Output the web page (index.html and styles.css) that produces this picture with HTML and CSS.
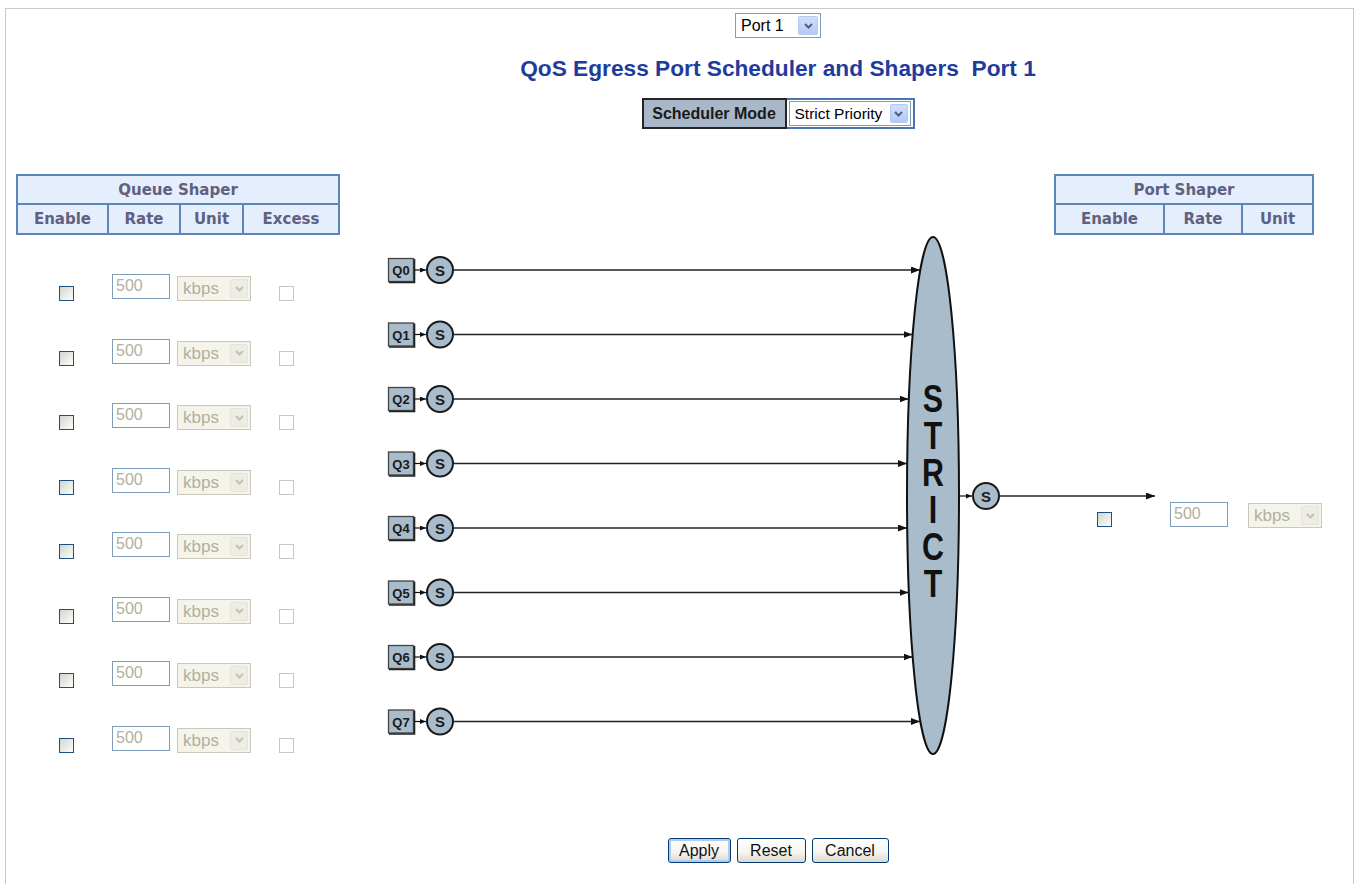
FILE: index.html
```html
<!DOCTYPE html>
<html>
<head>
<meta charset="utf-8">
<title>QoS Egress Port Scheduler and Shapers</title>
<link rel="stylesheet" href="styles.css">
</head>
<body>
<div class="frame">

<div class="head">
  <span class="sel port"><span class="sel-text">Port 1</span><span class="sel-btn"><svg width="9" height="6" viewBox="0 0 9 6"><path d="M1 1 L4.5 4.5 L8 1" fill="none" stroke="currentColor" stroke-width="2"/></svg></span></span>
  <h1>QoS Egress Port Scheduler and Shapers&nbsp; Port 1</h1>
  <div class="mode">
    <div class="mode-label">Scheduler Mode</div>
    <div class="mode-cell">
      <span class="sel mode-sel"><span class="sel-text">Strict Priority</span><span class="sel-btn"><svg width="9" height="6" viewBox="0 0 9 6"><path d="M1 1 L4.5 4.5 L8 1" fill="none" stroke="currentColor" stroke-width="2"/></svg></span></span>
    </div>
  </div>
</div>

<div class="main">
  <!-- queue shapers -->
  <div class="qcol">
    <table class="shaper qtable">
      <colgroup><col class="w91"><col class="w72"><col class="w63"><col></colgroup>
      <tr><th colspan="4">Queue Shaper</th></tr>
      <tr class="sub"><th>Enable</th><th>Rate</th><th>Unit</th><th>Excess</th></tr>
    </table>
    <div class="qrows">
      <div class="qrow"><span class="cb"></span><span class="txt">500</span><span class="sel dis"><span class="sel-text">kbps</span><span class="sel-btn"><svg width="9" height="6" viewBox="0 0 9 6"><path d="M1 1 L4.5 4.5 L8 1" fill="none" stroke="currentColor" stroke-width="2"/></svg></span></span><span class="cb dis"></span></div>
      <div class="qrow"><span class="cb"></span><span class="txt">500</span><span class="sel dis"><span class="sel-text">kbps</span><span class="sel-btn"><svg width="9" height="6" viewBox="0 0 9 6"><path d="M1 1 L4.5 4.5 L8 1" fill="none" stroke="currentColor" stroke-width="2"/></svg></span></span><span class="cb dis"></span></div>
      <div class="qrow"><span class="cb"></span><span class="txt">500</span><span class="sel dis"><span class="sel-text">kbps</span><span class="sel-btn"><svg width="9" height="6" viewBox="0 0 9 6"><path d="M1 1 L4.5 4.5 L8 1" fill="none" stroke="currentColor" stroke-width="2"/></svg></span></span><span class="cb dis"></span></div>
      <div class="qrow"><span class="cb"></span><span class="txt">500</span><span class="sel dis"><span class="sel-text">kbps</span><span class="sel-btn"><svg width="9" height="6" viewBox="0 0 9 6"><path d="M1 1 L4.5 4.5 L8 1" fill="none" stroke="currentColor" stroke-width="2"/></svg></span></span><span class="cb dis"></span></div>
      <div class="qrow"><span class="cb"></span><span class="txt">500</span><span class="sel dis"><span class="sel-text">kbps</span><span class="sel-btn"><svg width="9" height="6" viewBox="0 0 9 6"><path d="M1 1 L4.5 4.5 L8 1" fill="none" stroke="currentColor" stroke-width="2"/></svg></span></span><span class="cb dis"></span></div>
      <div class="qrow"><span class="cb"></span><span class="txt">500</span><span class="sel dis"><span class="sel-text">kbps</span><span class="sel-btn"><svg width="9" height="6" viewBox="0 0 9 6"><path d="M1 1 L4.5 4.5 L8 1" fill="none" stroke="currentColor" stroke-width="2"/></svg></span></span><span class="cb dis"></span></div>
      <div class="qrow"><span class="cb"></span><span class="txt">500</span><span class="sel dis"><span class="sel-text">kbps</span><span class="sel-btn"><svg width="9" height="6" viewBox="0 0 9 6"><path d="M1 1 L4.5 4.5 L8 1" fill="none" stroke="currentColor" stroke-width="2"/></svg></span></span><span class="cb dis"></span></div>
      <div class="qrow"><span class="cb"></span><span class="txt">500</span><span class="sel dis"><span class="sel-text">kbps</span><span class="sel-btn"><svg width="9" height="6" viewBox="0 0 9 6"><path d="M1 1 L4.5 4.5 L8 1" fill="none" stroke="currentColor" stroke-width="2"/></svg></span></span><span class="cb dis"></span></div>
    </div>
  </div>

  <!-- scheduler diagram -->
  <svg class="diagram" width="669" height="530" viewBox="385 230 669 530">
    <defs>
      <marker id="ah" markerWidth="9" markerHeight="7" refX="9" refY="3.5" orient="auto" markerUnits="userSpaceOnUse">
        <path d="M0 0 L9 3.5 L0 7 z" fill="#111"/>
      </marker>
      <marker id="sa" markerWidth="6" markerHeight="5" refX="6" refY="2.5" orient="auto" markerUnits="userSpaceOnUse">
        <path d="M0 0 L6 2.5 L0 5 z" fill="#111"/>
      </marker>
      <g id="qs">
        <rect x="388.5" y="-11.5" width="25" height="23" fill="#a9bccb" stroke="#444" stroke-width="1.3"/>
        <path d="M389 12.5 H414.5 V-11" fill="none" stroke="#222" stroke-width="1.6"/>
        <line x1="414" y1="0" x2="426" y2="0" stroke="#111" stroke-width="1.2" marker-end="url(#sa)"/>
        <circle cx="440" cy="0" r="13" fill="#a9bccb" stroke="#1a1a1a" stroke-width="2"/>
        <text x="440" y="5.5" class="s-lbl">S</text>
      </g>
    </defs>

    <g transform="translate(0 269)"><use href="#qs"/><text x="401" y="5" class="q-lbl">Q0</text><line x1="454" y1="0" x2="920" y2="0" class="ln" marker-end="url(#ah)"/></g>
    <g transform="translate(0 333.5)"><use href="#qs"/><text x="401" y="5" class="q-lbl">Q1</text><line x1="454" y1="0" x2="912.5" y2="0" class="ln" marker-end="url(#ah)"/></g>
    <g transform="translate(0 398)"><use href="#qs"/><text x="401" y="5" class="q-lbl">Q2</text><line x1="454" y1="0" x2="908.5" y2="0" class="ln" marker-end="url(#ah)"/></g>
    <g transform="translate(0 462.5)"><use href="#qs"/><text x="401" y="5" class="q-lbl">Q3</text><line x1="454" y1="0" x2="907" y2="0" class="ln" marker-end="url(#ah)"/></g>
    <g transform="translate(0 527)"><use href="#qs"/><text x="401" y="5" class="q-lbl">Q4</text><line x1="454" y1="0" x2="907" y2="0" class="ln" marker-end="url(#ah)"/></g>
    <g transform="translate(0 591.5)"><use href="#qs"/><text x="401" y="5" class="q-lbl">Q5</text><line x1="454" y1="0" x2="908.5" y2="0" class="ln" marker-end="url(#ah)"/></g>
    <g transform="translate(0 656)"><use href="#qs"/><text x="401" y="5" class="q-lbl">Q6</text><line x1="454" y1="0" x2="912.5" y2="0" class="ln" marker-end="url(#ah)"/></g>
    <g transform="translate(0 720.5)"><use href="#qs"/><text x="401" y="5" class="q-lbl">Q7</text><line x1="454" y1="0" x2="920" y2="0" class="ln" marker-end="url(#ah)"/></g>

    <ellipse cx="933" cy="494.5" rx="26" ry="258.5" fill="#a9bccb" stroke="#111" stroke-width="2"/>
    <g transform="translate(933 0) scale(0.8 1)">
      <text x="0" y="377" class="strict">STRICT</text>
    </g>

    <line x1="959" y1="495" x2="972" y2="495" stroke="#111" stroke-width="1.2" marker-end="url(#sa)"/>
    <circle cx="986" cy="495" r="13" fill="#a9bccb" stroke="#1a1a1a" stroke-width="2"/>
    <text x="986" y="500.5" class="s-lbl">S</text>
    <line x1="999" y1="495" x2="1155" y2="495" class="ln" marker-end="url(#ah)"/>
  </svg>

  <!-- port shaper -->
  <div class="pcol">
    <table class="shaper ptable">
      <colgroup><col class="w109"><col class="w78"><col></colgroup>
      <tr><th colspan="3">Port Shaper</th></tr>
      <tr class="sub"><th>Enable</th><th>Rate</th><th>Unit</th></tr>
    </table>
    <div class="prow"><span class="cb"></span><span class="txt">500</span><span class="sel dis"><span class="sel-text">kbps</span><span class="sel-btn"><svg width="9" height="6" viewBox="0 0 9 6"><path d="M1 1 L4.5 4.5 L8 1" fill="none" stroke="currentColor" stroke-width="2"/></svg></span></span></div>
  </div>
</div>

<div class="btns">
  <button class="btn apply">Apply</button>
  <button class="btn reset">Reset</button>
  <button class="btn cancel">Cancel</button>
</div>

</div>
</body>
</html>
```
FILE: styles.css
```css
body {
	margin		: 0;
	background-color: white;
	font-family	: "Liberation Sans", Arial, sans-serif;
	color		: #000;
}
.frame {
	margin		: 8px 0 0 5px;
	width		: 1347px;
	min-height	: 900px;
	border		: 1px solid #c8c8c8;
	border-bottom	: 0;
}

/* heading block, centred a little right of the frame */
.head {
	padding		: 4px 0 0 197px;
	text-align	: center;
}
h1 {
	margin		: 17px 0 0;
	font-size	: 22.7px;
	line-height	: 27px;
	color		: #1d3c9c;
}
.mode {
	display		: inline-flex;
	margin-top	: 16px;
	vertical-align	: top;
}
.mode-label {
	box-sizing	: border-box;
	width		: 145px;
	height		: 31px;
	line-height	: 27px;
	background	: #a8b8c8;
	border		: 2px solid #262626;
	font-size	: 16px;
	font-weight	: bold;
	color		: #1a1a1a;
}
.mode-cell {
	box-sizing	: border-box;
	width		: 128px;
	height		: 31px;
	border		: 2px solid #4a75b5;
	border-left	: 0;
	padding		: 1px 2px 1px 2px;
}

/* xp style select */
.sel {
	display		: inline-flex;
	box-sizing	: border-box;
	height		: 25px;
	padding		: 2px;
	border		: 1px solid #7f9db9;
	background	: #fff;
	font-size	: 16px;
	vertical-align	: top;
}
.sel-text {
	flex		: 1;
	text-align	: left;
	padding-left	: 3px;
	line-height	: 19px;
	white-space	: nowrap;
}
.sel-btn {
	display		: flex;
	align-items	: center;
	justify-content	: center;
	box-sizing	: border-box;
	width		: 18px;
	border		: 1px solid #b6c8f2;
	border-radius	: 2px;
	background	: linear-gradient(#d2defc, #b5c9f7);
	color		: #4d6185;
}
.port {
	width		: 86px;
}
.port .sel-btn {
	width		: 20px;
}
.mode-sel {
	width		: 122px;
	font-size	: 15.5px;
}
.sel.dis {
	width		: 74px;
	border-color	: #cac8bb;
	background	: #f5f4ea;
	color		: #b3afa0;
	font-size	: 17px;
}
.sel.dis .sel-btn {
	border-color	: #e6e4da;
	background	: #eeede5;
	color		: #c4c2b6;
}

.cb {
	display		: inline-block;
	width		: 13px;
	height		: 13px;
	border		: 1px solid #1c5180;
	background	: linear-gradient(135deg, #d4d4ce, #fdfdfc);
}
.cb.dis {
	border-color	: #cac8bb;
	background	: #fff;
}
.txt {
	display		: inline-block;
	box-sizing	: border-box;
	width		: 58px;
	height		: 25px;
	padding		: 1px 3px;
	border		: 1px solid #7f9db9;
	color		: #b3afa0;
	font-size	: 16px;
	line-height	: 19px;
}

/* main area */
.main {
	display		: flex;
	height		: 647px;
	margin-top	: 45px;
	padding-left	: 10px;
}
.shaper {
	border-collapse	: collapse;
	table-layout	: fixed;
}
.shaper th {
	height		: 27px;
	padding		: 0;
	border		: 2px solid #5c86ba;
	background	: #e4eefc;
	color		: #606080;
	font-family	: "DejaVu Sans", Verdana, sans-serif;
	font-size	: 15px;
	font-weight	: bold;
	text-align	: center;
}
.shaper .sub th {
	height		: 28px;
}
.qtable		{ width: 324px; }
.ptable		{ width: 260px; }
.w91		{ width: 91px; }
.w72		{ width: 72px; }
.w63		{ width: 63px; }
.w109		{ width: 109px; }
.w78		{ width: 78px; }

.qcol {
	width		: 324px;
}
.qrows {
	padding-top	: 39px;
}
.qrow {
	display		: flex;
	align-items	: flex-start;
	height		: 64.5px;
}
.qrow .cb	{ margin: 12px 0 0 43px; }
.qrow .txt	{ margin-left: 38px; }
.qrow .sel	{ margin: 2px 0 0 7px; }
.qrow .cb.dis	{ margin: 12px 0 0 28px; }

.diagram {
	flex		: none;
	margin		: 57px 0 0 45px;
	overflow	: visible;
}
.ln {
	stroke		: #222;
	stroke-width	: 1.3;
}
.q-lbl {
	font-family	: "Liberation Sans", Arial, sans-serif;
	font-size	: 13px;
	font-weight	: bold;
	text-anchor	: middle;
	fill		: #1a1a1a;
}
.s-lbl {
	font-family	: "Liberation Sans", Arial, sans-serif;
	font-size	: 15px;
	font-weight	: bold;
	text-anchor	: middle;
	fill		: #1a1a1a;
}
.strict {
	font-family	: "Liberation Sans", Arial, sans-serif;
	font-size	: 38px;
	font-weight	: bold;
	letter-spacing	: -5px;
	writing-mode	: vertical-rl;
	text-orientation: upright;
	fill		: #111;
}

.pcol {
	width		: 268px;
}
.prow {
	display		: flex;
	align-items	: flex-start;
	margin-top	: 267px;
}
.prow .cb	{ margin: 10px 0 0 43px; }
.prow .txt	{ margin-left: 58px; }
.prow .sel	{ margin: 1px 0 0 20px; }

/* buttons */
.btns {
	margin-top	: 17px;
	padding-left	: 197px;
	text-align	: center;
	font-size	: 0;
}
.btn {
	box-sizing	: border-box;
	height		: 25px;
	margin		: 0 3px;
	padding		: 0;
	border		: 1px solid #003c74;
	border-radius	: 3px;
	background	: linear-gradient(#ffffff, #f4f4f0 60%, #dcd8cc);
	font-family	: "Liberation Sans", Arial, sans-serif;
	font-size	: 16px;
	color		: #111;
}
.apply {
	width		: 63px;
	box-shadow	: inset 0 0 0 2px #b4c8f0;
}
.reset		{ width: 69px; }
.cancel		{ width: 77px; }
```
